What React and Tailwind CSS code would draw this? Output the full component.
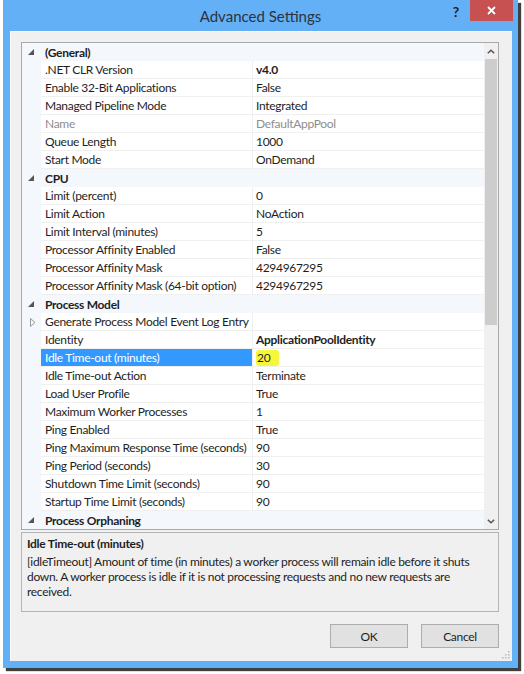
import React from "react";

const rows = [
  { cat: "(General)" },
  { n: ".NET CLR Version", v: "v4.0", bold: true },
  { n: "Enable 32-Bit Applications", v: "False" },
  { n: "Managed Pipeline Mode", v: "Integrated" },
  { n: "Name", v: "DefaultAppPool", gray: true },
  { n: "Queue Length", v: "1000" },
  { n: "Start Mode", v: "OnDemand" },
  { cat: "CPU" },
  { n: "Limit (percent)", v: "0" },
  { n: "Limit Action", v: "NoAction" },
  { n: "Limit Interval (minutes)", v: "5" },
  { n: "Processor Affinity Enabled", v: "False" },
  { n: "Processor Affinity Mask", v: "4294967295" },
  { n: "Processor Affinity Mask (64-bit option)", v: "4294967295" },
  { cat: "Process Model" },
  { n: "Generate Process Model Event Log Entry", v: "", expand: true },
  { n: "Identity", v: "ApplicationPoolIdentity", bold: true },
  { n: "Idle Time-out (minutes)", v: "20", selected: true },
  { n: "Idle Time-out Action", v: "Terminate" },
  { n: "Load User Profile", v: "True" },
  { n: "Maximum Worker Processes", v: "1" },
  { n: "Ping Enabled", v: "True" },
  { n: "Ping Maximum Response Time (seconds)", v: "90" },
  { n: "Ping Period (seconds)", v: "30" },
  { n: "Shutdown Time Limit (seconds)", v: "90" },
  { n: "Startup Time Limit (seconds)", v: "90" },
  { cat: "Process Orphaning" },
];

function CatArrow() {
  return (
    <svg width="6" height="6" viewBox="0 0 6 6">
      <polygon points="6,0 6,6 0,6" fill="#555" />
    </svg>
  );
}

function ExpandArrow() {
  return (
    <svg width="6" height="9" viewBox="0 0 6 9">
      <polygon points="0.5,0.5 5,4.5 0.5,8.5" fill="none" stroke="#999" strokeWidth="1" />
    </svg>
  );
}

function Row({ r }) {
  if (r.cat) {
    return (
      <div className="flex h-[18px] items-center bg-[#f4f7fc]">
        <div className="w-[19px] flex justify-end pr-[7px]">
          <CatArrow />
        </div>
        <div className="pl-[4px] font-bold text-[#1e1e1e]">{r.cat}</div>
      </div>
    );
  }
  return (
    <div className="flex h-[18px]">
      <div className="w-[19px] bg-[#f4f7fc] flex items-center justify-end pr-[5px]">
        {r.expand ? <ExpandArrow /> : null}
      </div>
      <div
        className={
          "w-[212px] border-r border-b border-[#f0f0f0] flex items-center pl-[4px] whitespace-nowrap overflow-hidden " +
          (r.selected ? "bg-[#3399ff] text-white" : r.gray ? "bg-white text-[#8d8d8d]" : "bg-white text-[#1e1e1e]")
        }
      >
        {r.n}
      </div>
      <div
        className={
          "flex-1 bg-white border-b border-[#f0f0f0] flex items-center pl-[3px] whitespace-nowrap " +
          (r.bold ? "font-bold text-[#1e1e1e]" : r.gray ? "text-[#8d8d8d]" : "text-[#1e1e1e]")
        }
      >
        {r.selected ? (
          <span className="bg-[#f6f73a] rounded-[3px] pl-[1px] pr-[9px] h-[16px] flex items-center">{r.v}</span>
        ) : (
          r.v
        )}
      </div>
    </div>
  );
}

export default function App() {
  return (
    <div
      className="w-[524px] h-[674px] bg-white pl-[3px] text-[12px] leading-[15px] tracking-[-0.3px]"
      style={{ fontFamily: "Lato, 'Noto Sans', sans-serif" }}
    >
      <div className="w-[515px] h-[668px] bg-[#63b0f6] shadow-[3px_3px_1px_rgba(0,0,0,0.75)] flex flex-col">
        {/* Title bar */}
        <div className="h-[31px] relative flex items-center justify-center">
          <span className="text-[15px] tracking-normal text-[#2b3340] pt-[1px]">Advanced Settings</span>
          <span className="absolute right-[59px] top-[4px] text-[14px] font-bold text-[#1e1e1e]">?</span>
          <div className="absolute right-[5px] top-0 w-[43px] h-[21px] bg-[#c75050] flex items-center justify-center">
            <svg width="9" height="9" viewBox="0 0 9 9">
              <path d="M1 1 L8 8 M8 1 L1 8" stroke="white" strokeWidth="1.8" />
            </svg>
          </div>
        </div>

        {/* Client area */}
        <div className="ml-[7px] mr-[6px] mb-[7px] flex-1 bg-[#f0f0f0] border-t border-l border-[#fbfbfb] relative pt-[10px] pl-[10px] pr-[13px] flex flex-col">
          {/* Property grid */}
          <div className="h-[488px] border border-[#a9a9a9] flex">
            <div className="w-[462px] flex flex-col">
              {rows.map((r, i) => (
                <Row key={i} r={r} />
              ))}
            </div>
            <div className="w-[14px] bg-[#f0f0f0] flex flex-col">
              <div className="h-[16px] flex items-center justify-center">
                <svg width="8" height="5" viewBox="0 0 8 5">
                  <path d="M0.8 4.3 L4 1.2 L7.2 4.3" stroke="#555" strokeWidth="1.5" fill="none" />
                </svg>
              </div>
              <div className="mx-[1px] h-[266px] bg-[#cdcdcd]" />
              <div className="flex-1" />
              <div className="h-[16px] flex items-center justify-center">
                <svg width="8" height="5" viewBox="0 0 8 5">
                  <path d="M0.8 0.7 L4 3.8 L7.2 0.7" stroke="#555" strokeWidth="1.5" fill="none" />
                </svg>
              </div>
            </div>
          </div>

          {/* Description */}
          <div className="mt-[2px] h-[80px] border border-[#b4b4b4] pl-[5px] pt-[3px] pr-[4px] text-[#1e1e1e] whitespace-nowrap">
            <div className="font-bold">Idle Time-out (minutes)</div>
            <div className="mt-[3px]">
              [idleTimeout] Amount of time (in minutes) a worker process will remain idle before it shuts
              <br />
              down. A worker process is idle if it is not processing requests and no new requests are
              <br />
              received.
            </div>
          </div>

          {/* Buttons */}
          <div className="mt-[12px] flex justify-end gap-[13px]">
            <button className="w-[78px] h-[24px] bg-[#e1e1e1] border border-[#adadad] text-[#1e1e1e]">OK</button>
            <button className="w-[78px] h-[24px] bg-[#e1e1e1] border border-[#adadad] text-[#1e1e1e]">Cancel</button>
          </div>

          {/* Resize grip */}
          <svg className="absolute right-[2px] bottom-[2px]" width="8" height="8" viewBox="0 0 8 8">
            <rect x="6" y="0" width="1.5" height="1.5" fill="#b8b8b8" />
            <rect x="3" y="3" width="1.5" height="1.5" fill="#b8b8b8" />
            <rect x="6" y="3" width="1.5" height="1.5" fill="#b8b8b8" />
            <rect x="0" y="6" width="1.5" height="1.5" fill="#b8b8b8" />
            <rect x="3" y="6" width="1.5" height="1.5" fill="#b8b8b8" />
            <rect x="6" y="6" width="1.5" height="1.5" fill="#b8b8b8" />
          </svg>
        </div>
      </div>
    </div>
  );
}
